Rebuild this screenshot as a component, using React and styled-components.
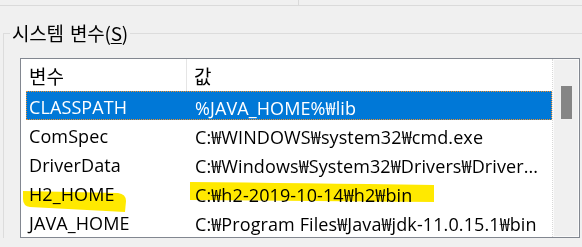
import React from 'react'
import styled, { createGlobalStyle } from 'styled-components'

const GlobalStyle = createGlobalStyle`
  html, body {
    margin: 0;
    padding: 0;
    background: #f0f0f0;
    overflow: hidden;
  }
  body {
    font-family: "Open Sans", "Noto Sans CJK KR", sans-serif;
  }
`

const rows = [
  { name: 'CLASSPATH', value: '%JAVA_HOME%₩lib', selected: true },
  { name: 'ComSpec', value: 'C:₩WINDOWS₩system32₩cmd.exe' },
  { name: 'DriverData', value: 'C:₩Windows₩System32₩Drivers₩Driver...' },
  { name: 'H2_HOME', value: 'C:₩h2-2019-10-14₩h2₩bin' },
  { name: 'JAVA_HOME', value: 'C:₩Program Files₩Java₩jdk-11.0.15.1₩bin' },
]

const App = () => (
  <Page>
    <GlobalStyle />
    <TopStrip>
      <TopPanel />
    </TopStrip>
    <Group>
      <Legend>
        시스템 변수(<u>S</u>)
      </Legend>
      <ListBox>
        <ListBody>
          <Header>
            <HeadCell width={166}>변수</HeadCell>
            <HeadCell>값</HeadCell>
          </Header>
          {rows.map((r) => (
            <Row key={r.name} selected={r.selected}>
              <NameCell>{r.name}</NameCell>
              <ValueCell>{r.value}</ValueCell>
            </Row>
          ))}
        </ListBody>
        <ScrollBar>
          <Thumb />
        </ScrollBar>
      </ListBox>
    </Group>
    <Marker viewBox="0 0 582 247" width="582" height="247">
      <path d="M23,191 L118,193 Q126,194 126,201 L125,212 L30,207 Q23,206 23,199 Z" />
      <path d="M190,182 Q300,183 434,185 L434,202 L190,200 Z" />
    </Marker>
  </Page>
)

export default App

const Page = styled.div`
  position: relative;
  width: 582px;
  height: 247px;
  overflow: hidden;
`

const TopStrip = styled.div`
  display: flex;
  height: 5px;
  border-bottom: 1px solid #dadada;
`

const TopPanel = styled.div`
  width: 298px;
  border-right: 1px solid #dadada;
`

const Group = styled.fieldset`
  margin: 13px 0 0 3px;
  padding: 0 0 0 16px;
  border: 1px solid #dcdcdc;
  border-right: none;
  border-bottom: none;
  min-width: 0;
`

const Legend = styled.legend`
  margin-left: -10px;
  padding: 0 2px;
  font-family: "Noto Sans CJK KR", sans-serif;
  font-size: 19px;
  line-height: 28px;
  letter-spacing: -0.2px;
  word-spacing: 2px;
  color: #000;
  u {
    text-decoration-thickness: 1px;
    text-underline-offset: 2px;
  }
`

const ListBox = styled.div`
  display: flex;
  margin-top: 11px;
  width: 558px;
  height: 178px;
  border: 1px solid #828790;
  background: #fff;
  overflow: hidden;
`

const ListBody = styled.div`
  flex: 1;
  display: flex;
  flex-direction: column;
  border-right: 1px dotted #d8d8d8;
  overflow: hidden;
`

const Header = styled.div`
  display: flex;
  height: 32px;
  align-items: center;
  flex-shrink: 0;
`

const HeadCell = styled.div`
  box-sizing: border-box;
  width: ${(p) => (p.width ? `${p.width}px` : 'auto')};
  height: 100%;
  padding-left: ${(p) => (p.width ? '8px' : '7px')};
  border-right: ${(p) => (p.width ? '1px solid #e5e5e5' : 'none')};
  font-family: "Noto Sans CJK KR", sans-serif;
  font-size: 19px;
  line-height: 33px;
  color: #000;
`

const Row = styled.div`
  display: flex;
  flex-shrink: 0;
  box-sizing: border-box;
  height: 29px;
  margin-left: 5px;
  padding-top: 3px;
  align-items: center;
  font-size: 18px;
  letter-spacing: 0.1px;
  white-space: nowrap;
  color: ${(p) => (p.selected ? '#fff' : '#000')};
  background: ${(p) => (p.selected ? '#0078d7' : 'transparent')};
  border: 1px dotted ${(p) => (p.selected ? '#f0902a' : 'transparent')};
`

const NameCell = styled.div`
  width: 162px;
  padding-left: 2px;
  box-sizing: border-box;
`

const ValueCell = styled.div`
  padding-left: 6px;
`

const ScrollBar = styled.div`
  position: relative;
  width: 26px;
  flex-shrink: 0;
  background: #f0f0f0;
  border: 1px solid #fafafa;
  box-sizing: border-box;
`

const Thumb = styled.div`
  width: 11px;
  height: 33px;
  margin: 26px 0 0 7px;
  background: #858585;
`

const Marker = styled.svg`
  position: absolute;
  top: 0;
  left: 0;
  pointer-events: none;
  mix-blend-mode: multiply;
  path {
    fill: #ffe900;
  }
`
